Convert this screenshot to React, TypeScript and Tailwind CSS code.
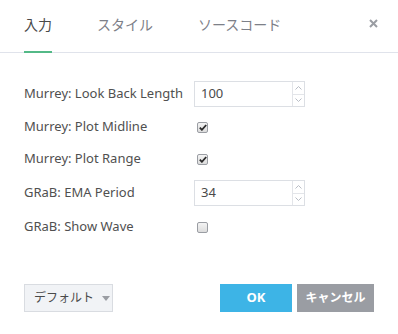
import { useState } from 'react';

const font = "font-['Noto_Sans','Noto_Sans_CJK_JP',sans-serif]";

const tabs = ['入力', 'スタイル', 'ソースコード'];

function NumberField({ value }: { value: string }) {
  return (
    <div className="flex h-[26px] w-[111px] border border-[#dcdfe4] bg-white">
      <div className="flex flex-1 items-center pl-[6px] text-[13px] text-[#4a4a4a]">{value}</div>
      <div className="flex w-[12px] flex-col border-l border-[#e3e5e9]">
        <div className="flex flex-1 items-center justify-center border-b border-[#e3e5e9]">
          <svg width="7" height="4" viewBox="0 0 7 4" fill="none" stroke="#b9bdc5" strokeWidth="1">
            <path d="M0.5 3.5 L3.5 0.5 L6.5 3.5" />
          </svg>
        </div>
        <div className="flex flex-1 items-center justify-center">
          <svg width="7" height="4" viewBox="0 0 7 4" fill="none" stroke="#b9bdc5" strokeWidth="1">
            <path d="M0.5 0.5 L3.5 3.5 L6.5 0.5" />
          </svg>
        </div>
      </div>
    </div>
  );
}

function Check({ checked }: { checked: boolean }) {
  return (
    <div className="ml-[3px] flex h-[11px] w-[11px] items-center justify-center rounded-[2px] border border-[#9a9da3] bg-gradient-to-b from-[#f4f4f4] to-[#dcdcdc]">
      {checked ? (
        <svg width="8" height="7" viewBox="0 0 8 7">
          <path d="M0.8 3.6 L2.9 5.8 L7.2 1" fill="none" stroke="#2b2b2b" strokeWidth="1.8" />
        </svg>
      ) : null}
    </div>
  );
}

export default function App() {
  const [active, setActive] = useState(0);

  return (
    <div className={`h-[334px] w-[398px] bg-white ${font}`}>
      <div className="flex h-[53px] items-stretch border-b border-[#e0e3eb] pl-[24px] pr-[20px]">
        <div className="flex gap-[45px]">
          {tabs.map((tab, i) => (
            <button
              key={tab}
              type="button"
              onClick={() => setActive(i)}
              className={`relative pb-[3px] text-[14px] ${active === i ? 'text-[#4a4a4a]' : 'text-[#7d8088]'}`}
            >
              {tab}
              {active === i ? <span className="absolute bottom-[-1px] left-0 right-0 h-[2px] bg-[#53b987]" /> : null}
            </button>
          ))}
        </div>
        <div className="ml-auto flex items-start pt-[19px]">
          <svg width="9" height="9" viewBox="0 0 9 9" stroke="#9a9da3" strokeWidth="2">
            <path d="M1 1 L8 8 M8 1 L1 8" />
          </svg>
        </div>
      </div>

      <div className="flex flex-col px-[24px] pt-[28px] text-[13px] text-[#505050]">
        <div className="flex h-[26px] items-center">
          <div className="w-[170px]">Murrey: Look Back Length</div>
          <NumberField value="100" />
        </div>
        <div className="mt-[9px] flex h-[22px] items-center">
          <div className="w-[170px]">Murrey: Plot Midline</div>
          <Check checked />
        </div>
        <div className="mt-[10px] flex h-[22px] items-center">
          <div className="w-[170px]">Murrey: Plot Range</div>
          <Check checked />
        </div>
        <div className="mt-[10px] flex h-[26px] items-center">
          <div className="w-[170px]">GRaB: EMA Period</div>
          <NumberField value="34" />
        </div>
        <div className="mt-[10px] flex h-[22px] items-center">
          <div className="w-[170px]">GRaB: Show Wave</div>
          <Check checked={false} />
        </div>
      </div>

      <div className="mt-[46px] flex items-center px-[24px]">
        <button
          type="button"
          className="flex h-[28px] w-[89px] items-center gap-[8px] whitespace-nowrap border border-[#d9dce1] bg-[#f1f3f6] pl-[9px] text-[12px] text-[#4a4a4a]"
        >
          デフォルト
          <svg width="8" height="5" viewBox="0 0 8 5">
            <path d="M0 0 L8 0 L4 5 Z" fill="#9a9da3" />
          </svg>
        </button>
        <button
          type="button"
          className="ml-auto h-[28px] w-[72px] bg-[#3db4e6] text-[13px] font-bold text-white"
        >
          OK
        </button>
        <button
          type="button"
          className="ml-[5px] h-[28px] w-[77px] whitespace-nowrap bg-[#9a9da3] text-[12px] font-bold text-white"
        >
          キャンセル
        </button>
      </div>
    </div>
  );
}
